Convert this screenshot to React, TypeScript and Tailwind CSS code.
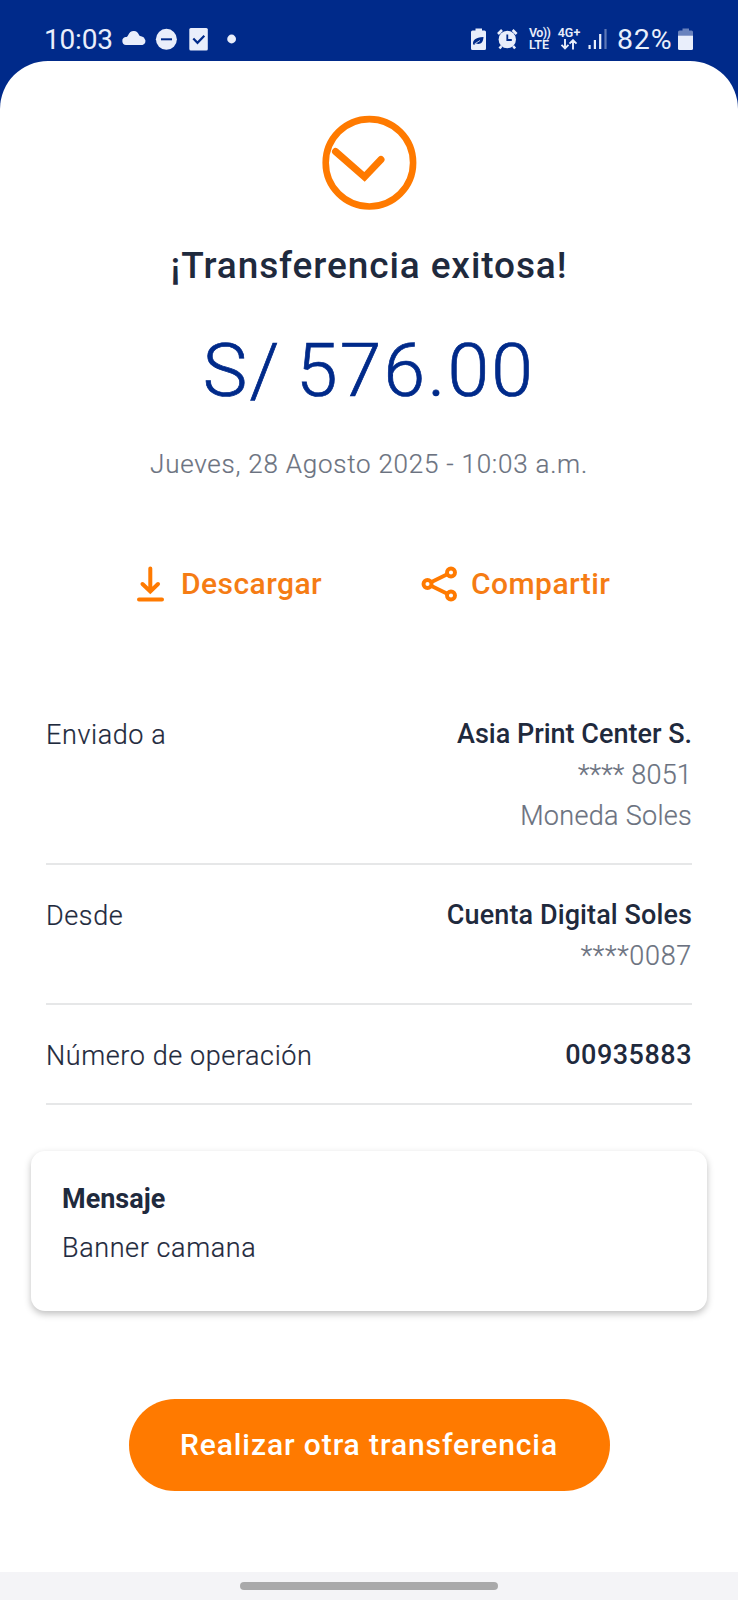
import React from 'react';

interface DetailRowProps {
  label: string;
  children: React.ReactNode;
}

function DetailRow({ label, children }: DetailRowProps) {
  return (
    <div className="flex justify-between border-b-2 border-[#e6e7e8] pt-[30px] pb-[26px] text-[27px] leading-[41px] whitespace-nowrap">
      <div className="pt-px font-light tracking-[0.6px] text-[#1f2a3d] [-webkit-text-stroke:0.2px]">{label}</div>
      <div className="flex flex-col items-end">{children}</div>
    </div>
  );
}

function StatusBar() {
  return (
    <header className="flex h-[61px] items-center justify-between pt-[18px] pr-[44px] pl-[44px] text-[#e9eefb]">
      <div className="flex h-[43px] items-start">
        <span className="h-[43px] w-[78px] text-[28px] leading-[43px] tracking-[-0.2px]">10:03</span>
        <svg width="116" height="43" viewBox="122 18 116 43" fill="currentColor">
          <path d="M126 45a4 4 0 0 1-.5-7.900c1.300-.2 2-.5 2.600-1.900 1.200-3 3.300-4.500 5.900-4.300 2.400.2 4 1.600 4.800 3.600.4 1.100 1 1.500 2.200 1.700 2.300.4 3.200 1.300 3.400 2.200A4 4 0 0 1 142.500 45z" />
          <circle cx="166.400" cy="39.300" r="10.500" />
          <path d="M161 39.300h11" stroke="#002a8a" strokeWidth="2" />
          <rect x="189.300" y="28" width="18.500" height="22.500" rx="1.500" />
          <path d="M193.300 38.500l4.200 4.300 6.800-7" fill="none" stroke="#002a8a" strokeWidth="2.200" />
          <circle cx="231.600" cy="39" r="4.400" />
        </svg>
      </div>
      <div className="flex h-[43px] items-start">
        <svg width="50" height="43" viewBox="470 18 50 43" fill="currentColor">
          <path d="M475.500 28.500h6.500v2h2.500q1.500 0 1.500 1.500v16.500q0 1.500-1.500 1.500h-12q-1.500 0-1.500-1.500V32q0-1.500 1.500-1.500h3z" />
          <path d="M473 44c0-4 2-6.500 10.500-7-.3 5.500-3 8-7.500 6.500l-2 1.500z" fill="#002a8a" />
          <path d="M474.500 44l5.500-3.500" stroke="currentColor" strokeWidth=".8" />
          <circle cx="507.300" cy="39.500" r="8.700" />
          <path d="M498 34l4-4M516.600 34l-4-4M501.500 46l-2 2.500M513.100 46l2 2.500" stroke="currentColor" strokeWidth="2.600" />
          <path d="M507.300 34.500v5.500h4.500" fill="none" stroke="#002a8a" strokeWidth="1.800" />
        </svg>
        <div className="ml-[9px] flex w-[28px] flex-col pt-[9px] text-[12.500px] leading-[12px] font-semibold">
          <span className="tracking-[-0.6px]">Vo))</span>
          <span>LTE</span>
        </div>
        <div className="flex w-[24px] flex-col items-center pt-[9px] text-[12.500px] leading-[12px] font-semibold">
          <span>4G+</span>
          <svg width="18" height="11" viewBox="0 0 18 11" fill="none" stroke="currentColor" strokeWidth="1.900">
            <path d="M5 0v9M1.500 5.800L5 9.300l3.500-3.500M13 10.500v-9M9.500 4.700L13 1.200l3.500 3.500" />
          </svg>
        </div>
        <svg className="ml-[7px]" width="20" height="43" viewBox="589 18 20 43" fill="currentColor">
          <rect x="589.500" y="45" width="2.200" height="4" />
          <rect x="594.800" y="40" width="2.200" height="9" />
          <rect x="600.100" y="34" width="2.200" height="15" />
          <rect x="605.400" y="29" width="2.200" height="20" opacity=".4" />
        </svg>
        <span className="ml-[9px] w-[61px] text-[28.5px] leading-[43px] tracking-[0.8px]">82%</span>
        <svg width="16" height="43" viewBox="679 18 16 43" fill="currentColor">
          <path d="M683.500 28.500h6.500v2h2.500q1.500 0 1.500 1.500v3.500h-15V32q0-1.500 1.500-1.500h3z" opacity=".45" />
          <path d="M679 35.500h15v13q0 1.500-1.500 1.500h-12q-1.500 0-1.500-1.500z" />
        </svg>
      </div>
    </header>
  );
}

export default function App() {
  return (
    <div className="flex h-[1600px] w-[738px] flex-col overflow-hidden bg-[#002a8a] font-['Roboto',sans-serif]">
      <StatusBar />
      <main className="flex flex-1 flex-col items-center rounded-t-[48px] bg-white whitespace-nowrap">
        <svg className="mt-[54px]" width="96" height="96" viewBox="0 0 96 96" fill="none" stroke="#ff7a00">
          <circle cx="48.400" cy="47.800" r="43.700" strokeWidth="6.600" />
          <path d="M14.500 36.500L43.500 62l16.500-17.500" strokeWidth="7" strokeLinecap="round" />
        </svg>

        <h1 className="mt-[31px] text-[37px] leading-[48px] font-medium tracking-[0.9px] text-[#1f2a3d]">¡Transferencia exitosa!</h1>
        <div className="mt-[35px] text-[75px] leading-[90px] font-light tracking-[2.2px] text-[#002a8a] [-webkit-text-stroke:0.7px] [word-spacing:-6px]">
          S/ 576.00
        </div>
        <div className="mt-[29px] text-[26px] leading-[40px] font-light tracking-[0.75px] text-[#6b7280] [-webkit-text-stroke:0.2px]">
          Jueves, 28 Agosto 2025 - 10:03 a.m.
        </div>

        <div className="mt-[80px] flex h-[40px] w-full items-center pl-[137px] text-[30px] leading-[40px] font-medium tracking-[0.45px] text-[#f57c14]">
          <button className="flex w-[284px] items-center">
            <svg width="28" height="36" viewBox="0 0 28 36" fill="none" stroke="#ff7a00" strokeWidth="4" strokeLinecap="round">
              <path d="M13.300 2.500v22M5.500 18l7.800 7.500L21 18M2 33.500h23" />
            </svg>
            <span className="ml-[16px]">Descargar</span>
          </button>
          <button className="flex items-center">
            <svg width="36" height="36" viewBox="0 0 36 36" fill="none" stroke="#ff7a00" strokeWidth="3.900">
              <circle cx="6.500" cy="18" r="4" />
              <circle cx="30" cy="6.500" r="4" />
              <circle cx="30" cy="29.500" r="4" />
              <path d="M10 16.200L26.300 8.300M10 19.800l16.300 7.900" />
            </svg>
            <span className="ml-[14px]">Compartir</span>
          </button>
        </div>

        <section className="mt-[80px] w-[646px]">
          <DetailRow label="Enviado a">
            <span className="font-medium text-[#1f2a3d]">Asia Print Center S.</span>
            <span className="font-light tracking-[0.2px] text-[#6b7280] [-webkit-text-stroke:0.2px]">**** 8051</span>
            <span className="font-light tracking-[0.3px] text-[#6b7280] [-webkit-text-stroke:0.2px]">Moneda Soles</span>
          </DetailRow>
          <DetailRow label="Desde">
            <span className="font-medium tracking-[0.1px] text-[#1f2a3d]">Cuenta Digital Soles</span>
            <span className="font-light tracking-[0.7px] text-[#6b7280] [-webkit-text-stroke:0.2px]">****0087</span>
          </DetailRow>
          <DetailRow label="Número de operación">
            <span className="font-medium tracking-[0.5px] text-[#1f2a3d]">00935883</span>
          </DetailRow>
        </section>

        <section className="mt-[46px] h-[160px] w-[676px] rounded-[14px] bg-white pt-[28px] pl-[31px] text-[27px] leading-[40px] text-[#1f2a3d] shadow-[0_3px_7px_rgba(0,0,0,0.25)]">
          <div className="font-bold">Mensaje</div>
          <div className="mt-[9px] font-light tracking-[0.6px] [-webkit-text-stroke:0.2px]">Banner camana</div>
        </section>

        <button className="mt-[88px] h-[92px] w-[481px] rounded-full bg-[#ff7a00] text-[30px] leading-[40px] font-medium tracking-[0.9px] text-white">
          Realizar otra transferencia
        </button>
      </main>
      <footer className="flex h-[28px] justify-center bg-[#f4f4f7] pt-[10px]">
        <div className="h-[8px] w-[258px] rounded-full bg-[#a9a9aa]" />
      </footer>
    </div>
  );
}
